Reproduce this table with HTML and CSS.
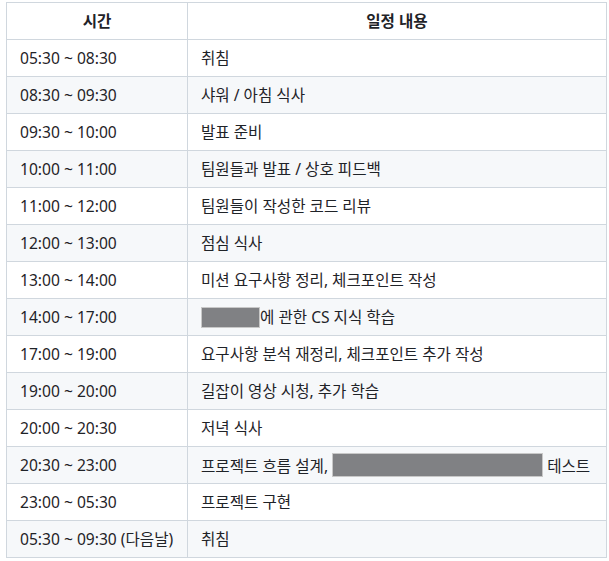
FILE: index.html
```html
<!DOCTYPE html>
<html lang="ko">
<head>
<meta charset="utf-8">
<link rel="stylesheet" href="styles.css">
</head>
<body>
<table class="schedule">
  <colgroup><col class="col-time"><col class="col-desc"></colgroup>
  <thead>
    <tr><th>시간</th><th>일정 내용</th></tr>
  </thead>
  <tbody>
    <tr><td>05:30 ~ 08:30</td><td>취침</td></tr>
    <tr><td>08:30 ~ 09:30</td><td>샤워 / 아침 식사</td></tr>
    <tr><td>09:30 ~ 10:00</td><td>발표 준비</td></tr>
    <tr><td>10:00 ~ 11:00</td><td>팀원들과 발표 / 상호 피드백</td></tr>
    <tr><td>11:00 ~ 12:00</td><td>팀원들이 작성한 코드 리뷰</td></tr>
    <tr><td>12:00 ~ 13:00</td><td>점심 식사</td></tr>
    <tr><td>13:00 ~ 14:00</td><td>미션 요구사항 정리, 체크포인트 작성</td></tr>
    <tr><td>14:00 ~ 17:00</td><td><span class="redact redact-s"></span>에 관한 CS 지식 학습</td></tr>
    <tr><td>17:00 ~ 19:00</td><td>요구사항 분석 재정리, 체크포인트 추가 작성</td></tr>
    <tr><td>19:00 ~ 20:00</td><td>길잡이 영상 시청, 추가 학습</td></tr>
    <tr><td>20:00 ~ 20:30</td><td>저녁 식사</td></tr>
    <tr><td>20:30 ~ 23:00</td><td>프로젝트 흐름 설계, <span class="redact redact-l"></span> 테스트</td></tr>
    <tr><td>23:00 ~ 05:30</td><td>프로젝트 구현</td></tr>
    <tr><td>05:30 ~ 09:30 (다음날)</td><td>취침</td></tr>
  </tbody>
</table>
</body>
</html>
```
FILE: styles.css
```css
html, body { margin: 0; padding: 0; background: #fff; }
body {
  padding: 2px 0 0 6px;
  font-family: "Noto Sans", "Noto Sans CJK KR", sans-serif;
  font-size: 15.6px;
  color: #1f2328;
}
.schedule {
  border-collapse: collapse;
  border-spacing: 0;
  table-layout: fixed;
  width: 600px;
}
.col-time { width: 181px; }
.col-desc { width: 419px; }
.schedule th, .schedule td {
  border: 1px solid #d0d7de;
  padding: 0 13px;
  height: 36px;
  line-height: 24px;
  text-align: left;
  white-space: nowrap;
  overflow: hidden;
}
.schedule th {
  font-weight: 700;
  text-align: center;
}
.schedule tbody tr:nth-child(2n) { background: #f6f8fa; }
.redact {
  display: inline-block;
  vertical-align: -5px;
  background: #808184;
  border: 1px solid #c8c8c8;
  box-sizing: border-box;
}
.redact-s { width: 59px; height: 21px; }
.redact-l { width: 211px; height: 24px; }
```
